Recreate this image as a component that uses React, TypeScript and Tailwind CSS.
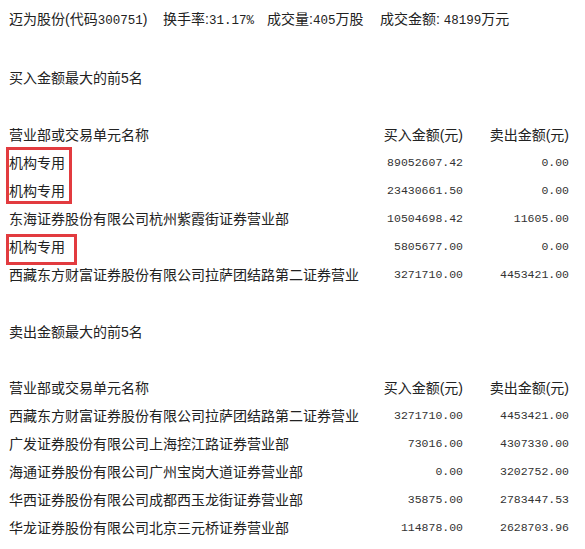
const BUY_TOP = [
  { name: '机构专用', buy: '89052607.42', sell: '0.00' },
  { name: '机构专用', buy: '23430661.50', sell: '0.00' },
  { name: '东海证券股份有限公司杭州紫霞街证券营业部', buy: '10504698.42', sell: '11605.00' },
  { name: '机构专用', buy: '5805677.00', sell: '0.00' },
  { name: '西藏东方财富证券股份有限公司拉萨团结路第二证券营业', buy: '3271710.00', sell: '4453421.00' },
];

const SELL_TOP = [
  { name: '西藏东方财富证券股份有限公司拉萨团结路第二证券营业', buy: '3271710.00', sell: '4453421.00' },
  { name: '广发证券股份有限公司上海控江路证券营业部', buy: '73016.00', sell: '4307330.00' },
  { name: '海通证券股份有限公司广州宝岗大道证券营业部', buy: '0.00', sell: '3202752.00' },
  { name: '华西证券股份有限公司成都西玉龙街证券营业部', buy: '35875.00', sell: '2783447.53' },
  { name: '华龙证券股份有限公司北京三元桥证券营业部', buy: '114878.00', sell: '2628703.96' },
];

const cjk = "font-['Liberation_Sans','Noto_Sans_CJK_SC',sans-serif]";
const mono = "font-['Liberation_Mono','Noto_Sans_CJK_SC',monospace]";

type Row = { name: string; buy: string; sell: string };

function TableBlock({ rows, marks }: { rows: Row[]; marks?: boolean }) {
  return (
    <div className="relative">
      <div className="flex h-[28px] items-center">
        <span className="w-[360px] shrink-0 text-[14px]">营业部或交易单元名称</span>
        <span className="w-[94px] shrink-0 text-right text-[14px]">买入金额(元)</span>
        <span className="w-[106px] shrink-0 text-right text-[14px]">卖出金额(元)</span>
      </div>
      {rows.map((row, i) => (
        <div key={i} className="flex h-[28px] items-center">
          <span className="w-[360px] shrink-0 overflow-hidden whitespace-nowrap text-[14px]">{row.name}</span>
          <span className={`w-[94px] shrink-0 text-right text-[11.5px] text-[#333] ${mono}`}>{row.buy}</span>
          <span className={`w-[106px] shrink-0 text-right text-[11.5px] text-[#333] ${mono}`}>{row.sell}</span>
        </div>
      ))}
      {marks && (
        <>
          <div className="absolute left-[-3px] top-[26px] h-[57px] w-[66px] border-[3px] border-[#e23b3f]" />
          <div className="absolute left-[-3px] top-[113px] h-[31px] w-[71px] border-[3px] border-[#e23b3f]" />
        </>
      )}
    </div>
  );
}

export default function App() {
  return (
    <div className={`h-[549px] w-[585px] bg-white pl-[9px] pt-[6px] text-[#222] ${cjk}`}>
      <div className="flex h-[28px] items-center whitespace-nowrap text-[14px]">
        <span className="w-[154px]">
          迈为股份(代码<span className={`text-[12.5px] ${mono}`}>300751</span>)
        </span>
        <span className="w-[104px]">
          换手率:<span className={`text-[12.5px] ${mono}`}>31.17%</span>
        </span>
        <span className="w-[113px]">
          成交量:<span className={`text-[12.5px] ${mono}`}>405</span>万股
        </span>
        <span>
          成交金额: <span className={`text-[12.5px] ${mono}`}>48199</span>万元
        </span>
      </div>

      <div className="mt-[30px] flex h-[28px] items-center text-[14px]">买入金额最大的前5名</div>
      <div className="mt-[29px]">
        <TableBlock rows={BUY_TOP} marks />
      </div>

      <div className="mt-[29px] flex h-[28px] items-center text-[14px]">卖出金额最大的前5名</div>
      <div className="mt-[28px]">
        <TableBlock rows={SELL_TOP} />
      </div>
    </div>
  );
}
